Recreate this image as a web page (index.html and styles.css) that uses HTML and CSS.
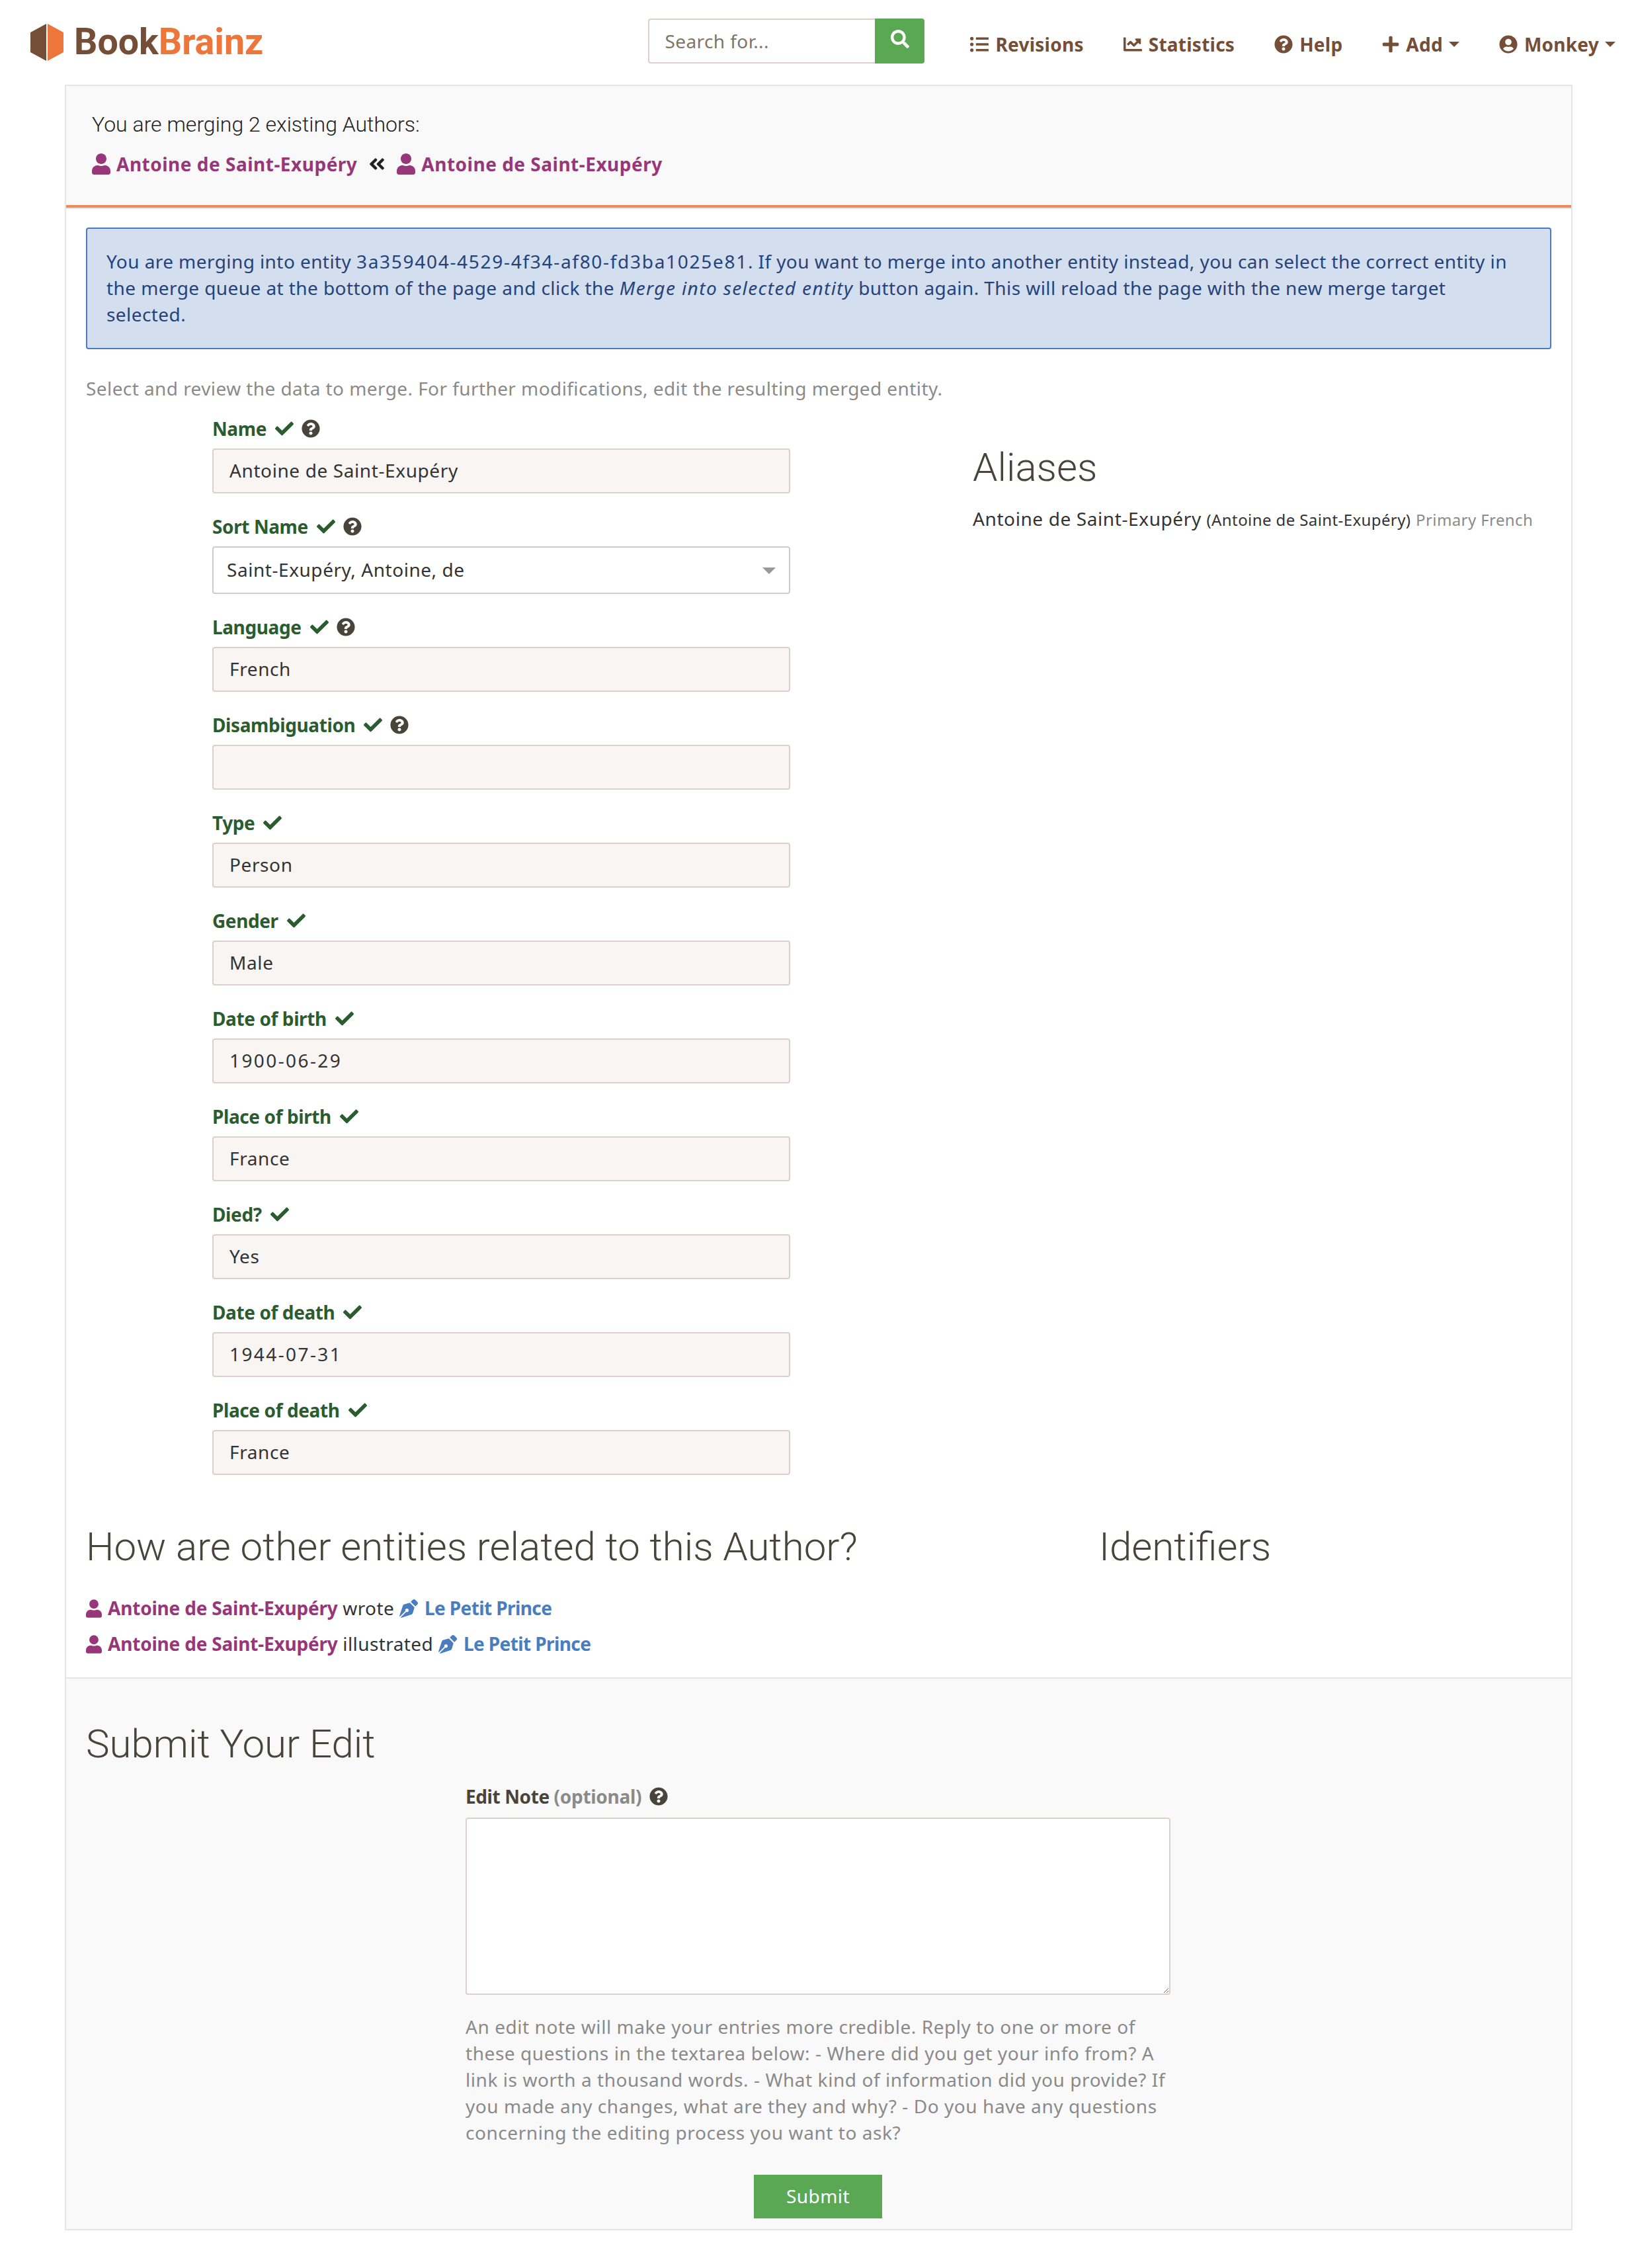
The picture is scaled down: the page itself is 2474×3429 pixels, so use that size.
FILE: index.html
```html
<!DOCTYPE html>
<html lang="en">
<head>
<meta charset="utf-8">
<title>BookBrainz</title>
<link rel="stylesheet" href="styles.css">
</head>
<body>
<svg class="defs" width="0" height="0" aria-hidden="true">
  <symbol id="i-user" viewBox="0 0 448 512"><path d="M224 256c70.7 0 128-57.3 128-128S294.7 0 224 0 96 57.3 96 128s57.3 128 128 128zm89.6 32h-16.7c-22.2 10.2-46.9 16-72.9 16s-50.6-5.8-72.9-16h-16.7C60.2 288 0 348.2 0 422.4V464c0 26.5 21.5 48 48 48h352c26.5 0 48-21.5 48-48v-41.6c0-74.2-60.2-134.4-134.4-134.4z"/></symbol>
  <symbol id="i-check" viewBox="0 0 512 512"><path d="M173.898 439.404l-166.4-166.4c-9.997-9.997-9.997-26.206 0-36.204l36.203-36.204c9.997-9.998 26.207-9.998 36.204 0L192 312.69 432.095 72.596c9.997-9.997 26.207-9.997 36.204 0l36.203 36.204c9.997 9.997 9.997 26.206 0 36.204l-294.4 294.401c-9.998 9.997-26.207 9.997-36.204-.001z"/></symbol>
  <symbol id="i-help" viewBox="0 0 512 512"><path d="M504 256c0 136.997-111.043 248-248 248S8 392.997 8 256C8 119.083 119.043 8 256 8s248 111.083 248 248zM262.655 90c-54.497 0-89.255 22.957-116.549 63.758-3.536 5.286-2.353 12.415 2.715 16.258l34.699 26.31c5.205 3.947 12.621 3.008 16.665-2.122 17.864-22.658 30.113-35.797 57.303-35.797 20.429 0 45.698 13.148 45.698 32.958 0 14.976-12.363 22.667-32.534 33.976C247.128 238.528 216 254.941 216 296v4c0 6.627 5.373 12 12 12h56c6.627 0 12-5.373 12-12v-1.333c0-28.462 83.186-29.647 83.186-106.667 0-58.002-60.165-102-116.531-102zM256 338c-25.365 0-46 20.635-46 46 0 25.364 20.635 46 46 46s46-20.636 46-46c0-25.365-20.635-46-46-46z"/></symbol>
  <symbol id="i-search" viewBox="0 0 512 512"><path d="M505 442.7L405.3 343c-4.5-4.5-10.6-7-17-7H372c27.6-35.3 44-79.7 44-128C416 93.1 322.9 0 208 0S0 93.1 0 208s93.1 208 208 208c48.3 0 92.7-16.4 128-44v16.3c0 6.4 2.5 12.5 7 17l99.7 99.7c9.4 9.4 24.6 9.4 33.9 0l28.3-28.3c9.4-9.4 9.4-24.6.1-34zM208 336c-70.7 0-128-57.2-128-128 0-70.7 57.2-128 128-128 70.7 0 128 57.2 128 128 0 70.7-57.2 128-128 128z"/></symbol>
  <symbol id="i-plus" viewBox="0 0 448 512"><path d="M416 208H272V64c0-17.67-14.33-32-32-32h-32c-17.67 0-32 14.33-32 32v144H32c-17.67 0-32 14.33-32 32v32c0 17.67 14.33 32 32 32h144v144c0 17.67 14.33 32 32 32h32c17.67 0 32-14.33 32-32V304h144c17.67 0 32-14.33 32-32v-32c0-17.67-14.33-32-32-32z"/></symbol>
  <symbol id="i-usercircle" viewBox="0 0 496 512"><path d="M248 8C111 8 0 119 0 256s111 248 248 248 248-111 248-248S385 8 248 8zm0 96c48.6 0 88 39.4 88 88s-39.4 88-88 88-88-39.4-88-88 39.4-88 88-88zm0 344c-58.7 0-111.3-26.6-146.5-68.2 18.8-35.4 55.6-59.8 98.5-59.8 2.4 0 4.8.4 7.1 1.1 13 4.2 26.6 6.9 40.9 6.9 14.3 0 28-2.7 40.9-6.9 2.3-.7 4.7-1.1 7.1-1.1 42.9 0 79.7 24.4 98.5 59.8C359.3 421.4 306.7 448 248 448z"/></symbol>
  <symbol id="i-angles" viewBox="0 0 448 512"><path d="M223.7 239l136-136c9.4-9.4 24.6-9.4 33.9 0l22.6 22.6c9.4 9.4 9.4 24.6 0 33.9L319.9 256l96.4 96.4c9.4 9.4 9.4 24.6 0 33.9L393.7 409c-9.4 9.4-24.6 9.4-33.9 0l-136-136c-9.5-9.4-9.5-24.6-.1-34zm-192 34l136 136c9.4 9.4 24.6 9.4 33.9 0l22.6-22.6c9.4-9.4 9.4-24.6 0-33.9L127.9 256l96.4-96.4c9.4-9.4 9.4-24.6 0-33.9L201.7 103c-9.4-9.4-24.6-9.4-33.9 0l-136 136c-9.5 9.4-9.5 24.6-.1 34z"/></symbol>
  <symbol id="i-pen" viewBox="0 0 512 512"><path d="M136.6 138.79a64.003 64.003 0 0 0-43.31 41.35L0 460l14.69 14.69L164.8 324.58c-2.99-6.26-4.8-13.18-4.8-20.58 0-26.51 21.49-48 48-48s48 21.49 48 48-21.49 48-48 48c-7.4 0-14.32-1.81-20.58-4.8L37.31 497.31 52 512l279.86-93.29a64.003 64.003 0 0 0 41.35-43.31L416 224 288 96l-151.4 42.79zm361.34-64.62l-60.11-60.11c-18.75-18.75-49.16-18.75-67.91 0l-56.55 56.55 128.02 128.02 56.55-56.55c18.75-18.75 18.75-49.15 0-67.91z"/></symbol>
  <symbol id="i-list" viewBox="0 0 512 512"><path d="M48 48a48 48 0 1 0 48 48 48 48 0 0 0-48-48zm0 160a48 48 0 1 0 48 48 48 48 0 0 0-48-48zm0 160a48 48 0 1 0 48 48 48 48 0 0 0-48-48zm448 16H176a16 16 0 0 0-16 16v32a16 16 0 0 0 16 16h320a16 16 0 0 0 16-16v-32a16 16 0 0 0-16-16zm0-320H176a16 16 0 0 0-16 16v32a16 16 0 0 0 16 16h320a16 16 0 0 0 16-16V80a16 16 0 0 0-16-16zm0 160H176a16 16 0 0 0-16 16v32a16 16 0 0 0 16 16h320a16 16 0 0 0 16-16v-32a16 16 0 0 0-16-16z"/></symbol>
  <symbol id="i-chart" viewBox="0 0 512 512"><path d="M496 384H64V80c0-8.84-7.16-16-16-16H16C7.16 64 0 71.16 0 80v336c0 17.67 14.33 32 32 32h464c8.84 0 16-7.16 16-16v-32c0-8.84-7.16-16-16-16zM464 96H345.94c-21.38 0-32.09 25.85-16.97 40.97l32.4 32.4L288 242.75l-73.37-73.37c-12.5-12.5-32.76-12.5-45.25 0l-68.69 68.69c-6.25 6.25-6.25 16.38 0 22.63l22.62 22.62c6.25 6.25 16.38 6.25 22.63 0L192 237.25l73.37 73.37c12.5 12.5 32.76 12.5 45.25 0l96-96 32.4 32.4c15.12 15.12 40.97 4.41 40.97-16.97V112c0-8.84-7.16-16-16-16z"/></symbol>
</svg>

<header class="navbar">
  <a class="brand" href="#">
    <svg class="brand-mark" viewBox="0 0 50 56"><path class="mark-dark" d="M24 0V56L0 43V13Z"/><path class="mark-orange" d="M26 0L50 13V43L26 56Z"/></svg>
    <span class="brand-book">Book</span><span class="brand-brainz">Brainz</span>
  </a>
  <form class="search">
    <span class="search-input">Search for...</span>
    <span class="search-btn"><svg class="icon"><use href="#i-search"/></svg></span>
  </form>
  <nav class="nav">
    <a href="#"><svg class="icon"><use href="#i-list"/></svg>Revisions</a>
    <a href="#"><svg class="icon"><use href="#i-chart"/></svg>Statistics</a>
    <a href="#"><svg class="icon"><use href="#i-help"/></svg>Help</a>
    <a href="#"><svg class="icon icon-narrow"><use href="#i-plus"/></svg>Add<i class="caret"></i></a>
    <a href="#"><svg class="icon"><use href="#i-usercircle"/></svg>Monkey<i class="caret"></i></a>
  </nav>
</header>

<main class="page">
  <section class="merge-head">
    <p class="merge-title">You are merging 2 existing Authors:</p>
    <p class="merge-links">
      <a class="author" href="#"><svg class="icon icon-user"><use href="#i-user"/></svg>Antoine de Saint-Exupéry</a>
      <svg class="icon icon-angles"><use href="#i-angles"/></svg>
      <a class="author" href="#"><svg class="icon icon-user"><use href="#i-user"/></svg>Antoine de Saint-Exupéry</a>
    </p>
  </section>

  <section class="body">
    <div class="alert">You are merging into entity <span class="digits-id">3a359404-4529-4f34-af80-fd3ba1025e81</span>. If you want to merge into another entity instead, you can select the correct entity in the merge queue at the bottom of the page and click the <em>Merge into selected entity</em> button again. This will reload the page with the new merge target selected.</div>
    <p class="lead">Select and review the data to merge. For further modifications, edit the resulting merged entity.</p>

    <div class="form-row">
      <div class="fields">
        <div class="field"><label>Name<svg class="icon icon-check"><use href="#i-check"/></svg><svg class="icon icon-help"><use href="#i-help"/></svg></label><div class="input">Antoine de Saint-Exupéry</div></div>
        <div class="field"><label>Sort Name<svg class="icon icon-check"><use href="#i-check"/></svg><svg class="icon icon-help"><use href="#i-help"/></svg></label><div class="select">Saint-Exupéry, Antoine, de<i class="select-caret"></i></div></div>
        <div class="field"><label>Language<svg class="icon icon-check"><use href="#i-check"/></svg><svg class="icon icon-help"><use href="#i-help"/></svg></label><div class="input">French</div></div>
        <div class="field"><label>Disambiguation<svg class="icon icon-check"><use href="#i-check"/></svg><svg class="icon icon-help"><use href="#i-help"/></svg></label><div class="input"></div></div>
        <div class="field"><label>Type<svg class="icon icon-check"><use href="#i-check"/></svg></label><div class="input">Person</div></div>
        <div class="field"><label>Gender<svg class="icon icon-check"><use href="#i-check"/></svg></label><div class="input">Male</div></div>
        <div class="field"><label>Date of birth<svg class="icon icon-check"><use href="#i-check"/></svg></label><div class="input input-date">1900-06-29</div></div>
        <div class="field"><label>Place of birth<svg class="icon icon-check"><use href="#i-check"/></svg></label><div class="input">France</div></div>
        <div class="field"><label>Died?<svg class="icon icon-check"><use href="#i-check"/></svg></label><div class="input">Yes</div></div>
        <div class="field"><label>Date of death<svg class="icon icon-check"><use href="#i-check"/></svg></label><div class="input input-date">1944-07-31</div></div>
        <div class="field"><label>Place of death<svg class="icon icon-check"><use href="#i-check"/></svg></label><div class="input">France</div></div>
      </div>
      <aside class="aliases">
        <h2>Aliases</h2>
        <p class="alias"><span class="alias-name">Antoine de Saint-Exupéry</span> <small>(Antoine de Saint-Exupéry)</small> <small class="muted">Primary French</small></p>
      </aside>
    </div>

    <div class="rel-row">
      <div>
        <h2>How are other entities related to this Author?</h2>
        <p class="rel"><a class="author" href="#"><svg class="icon icon-user-sm"><use href="#i-user"/></svg>Antoine de Saint-Exupéry</a> wrote <a class="work" href="#"><svg class="icon icon-pen"><use href="#i-pen"/></svg>Le Petit Prince</a></p>
        <p class="rel"><a class="author" href="#"><svg class="icon icon-user-sm"><use href="#i-user"/></svg>Antoine de Saint-Exupéry</a> illustrated <a class="work" href="#"><svg class="icon icon-pen"><use href="#i-pen"/></svg>Le Petit Prince</a></p>
      </div>
      <div><h2>Identifiers</h2></div>
    </div>
  </section>

  <section class="submit">
    <h2>Submit Your Edit</h2>
    <div class="note">
      <label class="note-label">Edit Note <span class="optional">(optional)</span><svg class="icon icon-help"><use href="#i-help"/></svg></label>
      <textarea class="note-area" aria-label="Edit Note"></textarea>
      <p class="note-help">An edit note will make your entries more credible. Reply to one or more of these questions in the textarea below: - Where did you get your info from? A link is worth a thousand words. - What kind of information did you provide? If you made any changes, what are they and why? - Do you have any questions concerning the editing process you want to ask?</p>
      <div class="note-actions"><button class="btn" type="button">Submit</button></div>
    </div>
  </section>
</main>
</body>
</html>
```
FILE: styles.css
```css
* { box-sizing: border-box; }
html, body { margin: 0; padding: 0; }
body {
  background: #fff;
  color: #333;
  font-family: "Noto Sans", "Liberation Sans", sans-serif;
  font-size: 28px;
  line-height: 40px;
  letter-spacing: .42px;
}
a { text-decoration: none; color: inherit; }
p { margin: 0; }
.defs { position: absolute; }
.icon { display: inline-block; width: 28px; height: 28px; fill: currentColor; flex: none; }

.navbar { display: flex; align-items: flex-start; height: 128px; padding: 28px 31px 0 46px; }
.brand { display: flex; align-items: baseline; font-family: Roboto, sans-serif; font-weight: 700; font-size: 55.5px; line-height: 56px; height: 56px; margin-top: 8px; letter-spacing: 0; }
.brand-mark { width: 50px; height: 56px; margin-right: 16px; align-self: flex-start; }
.mark-dark { fill: #754e37; }
.mark-orange { fill: #ed763b; }
.brand-book { color: #754e37; }
.brand-brainz { color: #ed763b; }
.search { display: flex; margin-left: auto; width: 418px; height: 68px; }
.search-input { flex: 1; border: 2px solid #ddd0cc; border-right: 0; border-radius: 4px 0 0 4px; padding: 12px 23px; line-height: 40px; color: #7d7568; }
.search-btn { width: 75px; background: #5aa854; color: #fff; border-radius: 0 4px 4px 0; display: flex; align-items: flex-start; justify-content: center; padding-top: 17px; }
.nav { display: flex; gap: 60px; margin-left: 69px; padding-top: 19px; color: #754e37; font-weight: 700; letter-spacing: .25px; }
.nav a { display: flex; align-items: center; gap: 10px; }
.icon-narrow { width: 26px; }
.caret { width: 0; height: 0; border: 8px solid transparent; border-top-color: #754e37; border-bottom: 0; margin-left: -1px; }

.page { width: 2280px; margin-left: 98px; border: 2px solid #e5e5e5; border-bottom: 0; }
.merge-head { background: #f9f9f9; height: 184px; padding: 38px 39px 0; border-bottom: 4px solid #ed8a5f; box-shadow: 0 2px 0 #e5e5e5; }
.merge-title { font-family: Roboto, sans-serif; font-weight: 300; font-size: 32px; line-height: 40px; color: #222; letter-spacing: 0; }
.merge-links { display: flex; align-items: center; margin-top: 20px; font-weight: 700; }
.author { color: #973678; font-weight: 700; }
.merge-links .author { display: flex; align-items: center; gap: 9px; letter-spacing: .5px; }
.icon-user { width: 28px; height: 32px; }
.icon-angles { margin: 0 16px; color: #222; }
.body { padding: 30px 30px 0; }
.alert { background: #d3deef; border: 2px solid #4a7dc0; border-radius: 4px; padding: 29px 40px 29px 29px; color: #25437a; height: 184px; }
.alert em { letter-spacing: 1.4px; }
.digits-id { letter-spacing: 1.7px; }
.lead { margin-top: 39px; color: #8a8a8a; }
.form-row { display: grid; grid-template-columns: 874px 1fr; column-gap: 276px; padding-left: 191px; margin-top: 21px; }
.field { margin-bottom: 30px; }
.field label { display: flex; align-items: center; height: 40px; margin-bottom: 10px; color: #2b5c2f; font-weight: 700; letter-spacing: -.4px; }
.icon-check { margin-left: 13px; color: #2b5c2f; }
.icon-help { margin-left: 12px; color: #49443a; }
.input { height: 68px; background: #f9f5f3; border: 2px solid #ddd0cc; border-radius: 4px; padding: 11px 24px; color: #333; letter-spacing: .6px; }
.input-date { letter-spacing: 2.4px; }
.select { position: relative; height: 72px; background: #fff; border: 2px solid #ccc; border-radius: 4px; padding: 13px 20px; color: #333; letter-spacing: .55px; }
.select-caret { position: absolute; right: 20px; top: 30px; width: 0; height: 0; border: 10px solid transparent; border-top-color: #999; border-bottom: 0; }
h2 { margin: 0; font-family: Roboto, sans-serif; font-weight: 300; font-size: 60px; line-height: 66px; color: #49443a; letter-spacing: 0; }
.aliases { padding-top: 46px; }
.alias { margin-top: 24px; color: #333; }
.alias-name { letter-spacing: .6px; }
.alias small { font-size: 24px; letter-spacing: .4px; }
.alias .muted { color: #8a8a8a; }
.rel-row { display: grid; grid-template-columns: 1532px 1fr; padding-top: 46px; height: 276px; }
.rel { height: 54px; line-height: 54px; }
.rel-row h2 + .rel { margin-top: 32px; }
.rel .author { letter-spacing: -.2px; }
.work { color: #4a7dc0; font-weight: 700; letter-spacing: -.6px; }
.icon-user-sm { width: 24px; height: 28px; margin-right: 9px; vertical-align: -4px; }
.icon-pen { margin-right: 10px; vertical-align: -4px; }
.submit { background: #f9f9f9; border-top: 2px solid #e5e5e5; border-bottom: 2px solid #e5e5e5; padding: 66px 30px 0; height: 836px; }
.note { width: 1066px; margin-left: 574px; margin-top: 26px; }
.note-label { display: flex; align-items: center; height: 40px; font-weight: 700; color: #49443a; white-space: pre; letter-spacing: -.4px; }
.optional { color: #8a8a8a; letter-spacing: -.3px; }
.note-area { display: block; width: 100%; height: 268px; margin-top: 12px; background: #fff; border: 2px solid #ddd0cc; border-radius: 4px; }
.note-help { margin-top: 28px; color: #8a8a8a; letter-spacing: .56px; }
.note-actions { text-align: center; margin-top: 44px; }
.btn { width: 194px; height: 66px; border: 0; background: #5aa854; color: #fff; font: inherit; letter-spacing: inherit; padding: 0 0 2px; }
```
